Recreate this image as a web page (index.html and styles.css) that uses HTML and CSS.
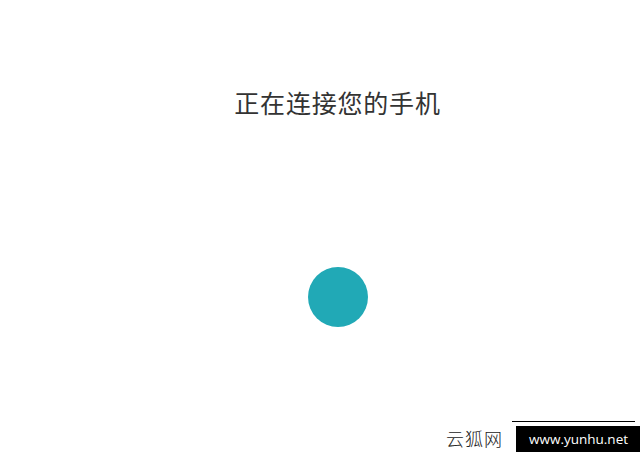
FILE: index.html
```html
<!DOCTYPE html>
<html lang="zh">
<head>
<meta charset="utf-8">
<link rel="stylesheet" href="styles.css">
</head>
<body>
<main class="screen">
  <h1 class="title">正在连接您的手机</h1>
  <div class="spinner"></div>
</main>
<div class="watermark">
  <span class="wm-name">云狐网</span>
  <span class="wm-url">www.yunhu.net</span>
</div>
</body>
</html>
```
FILE: styles.css
```css
html, body {
  margin: 0;
  padding: 0;
  background: #ffffff;
  width: 640px;
  height: 455px;
  overflow: hidden;
}
.screen {
  display: flex;
  flex-direction: column;
  align-items: center;
  padding-left: 35px;
  padding-top: 86px;
  box-sizing: border-box;
  width: 640px;
}
.title {
  margin: 0;
  font-family: "Noto Sans CJK SC", sans-serif;
  font-weight: 400;
  font-size: 25px;
  line-height: 32px;
  color: #333333;
  letter-spacing: 0.8px;
}
.spinner {
  margin-top: 149px;
  width: 60px;
  height: 60px;
  border-radius: 50%;
  background: #21a9b6;
}
.watermark {
  position: absolute;
  left: 446px;
  top: 424px;
  display: flex;
  align-items: flex-end;
}
.wm-name {
  font-family: "Noto Sans CJK SC", serif;
  font-weight: 300;
  font-size: 18px;
  line-height: 28px;
  color: #222;
  margin-right: 13px;
  letter-spacing: 1px;
}
.wm-url {
  display: block;
  width: 124px;
  height: 26px;
  background: #000;
  color: #fff;
  font-family: "Open Sans", "DejaVu Sans", sans-serif;
  font-size: 13.5px;
  line-height: 26px;
  padding-left: 13px;
  box-sizing: border-box;
  position: relative;
}
.wm-url::before {
  content: "";
  position: absolute;
  left: -4px;
  right: 5px;
  top: -5px;
  height: 1px;
  background: #000;
}
```
